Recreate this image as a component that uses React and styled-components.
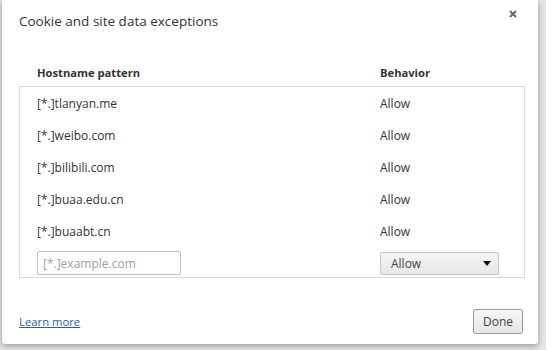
import React from "react";
import styled, { createGlobalStyle } from "styled-components";

const GlobalStyle = createGlobalStyle`
  html, body {
    margin: 0;
    padding: 0;
    width: 546px;
    height: 350px;
    overflow: hidden;
    background: #e4e4e4;
    font-family: "Open Sans", "Noto Sans", sans-serif;
  }
`;

const Backdrop = styled.div`
  width: 546px;
  height: 350px;
  box-sizing: border-box;
  padding: 0 8px 6px 2px;
  background: #e6e6e6;
`;

const Dialog = styled.div`
  position: relative;
  height: 100%;
  background: #fff;
  border-radius: 0 0 3px 3px;
  box-shadow: 0 2px 6px rgba(0, 0, 0, 0.35);
  display: flex;
  flex-direction: column;
  padding: 0 13px 0 17px;
  box-sizing: border-box;
`;

const Title = styled.h1`
  margin: 0;
  padding-top: 12px;
  height: 48px;
  box-sizing: border-box;
  font-size: 13.5px;
  font-weight: 400;
  color: #333;
`;

const CloseButton = styled.svg`
  position: absolute;
  top: 10px;
  right: 21px;
  width: 8px;
  height: 8px;
`;

const HeaderRow = styled.div`
  display: grid;
  grid-template-columns: 343px 1fr;
  padding-left: 18px;
  height: 38px;
  box-sizing: border-box;
  padding-bottom: 6px;
  align-items: end;
  font-size: 11.2px;
  font-weight: 700;
  color: #333;
`;

const ListBox = styled.div`
  border: 1px solid #d9d9d9;
  width: 506px;
  height: 192px;
  box-sizing: border-box;
`;

const Row = styled.div`
  display: grid;
  grid-template-columns: 343px 1fr;
  padding-left: 17px;
  height: 32px;
  align-items: center;
  font-size: 12px;
  color: #333;
`;

const PatternInput = styled.div`
  width: 144px;
  height: 24px;
  box-sizing: border-box;
  border: 1px solid #bfbfbf;
  border-radius: 2px;
  padding-left: 5px;
  display: flex;
  align-items: center;
  color: #a0a0a0;
  font-size: 12px;
`;

const Select = styled.div`
  width: 119px;
  height: 23px;
  box-sizing: border-box;
  border: 1px solid #c3c3c3;
  border-radius: 2px;
  background: linear-gradient(#f5f5f5, #e7e7e7);
  display: flex;
  align-items: center;
  justify-content: space-between;
  padding: 0 7px 0 10px;
  font-size: 12px;
  color: #444;
`;

const Arrow = styled.span`
  width: 0;
  height: 0;
  border-left: 4px solid transparent;
  border-right: 4px solid transparent;
  border-top: 5px solid #111;
`;

const Footer = styled.div`
  margin-top: auto;
  display: flex;
  align-items: center;
  justify-content: space-between;
  height: 35px;
  margin-bottom: 5px;
  padding-right: 2px;
`;

const LearnMore = styled.a`
  font-size: 11.3px;
  color: #2a5db0;
  text-decoration: underline;
`;

const DoneButton = styled.button`
  width: 50px;
  height: 25px;
  border: 1px solid #9a9a9a;
  border-radius: 2px;
  background: linear-gradient(#f7f7f7, #e6e6e6);
  font-family: inherit;
  font-size: 12px;
  color: #444;
  padding: 0;
`;

const entries = [
  "[*.]tlanyan.me",
  "[*.]weibo.com",
  "[*.]bilibili.com",
  "[*.]buaa.edu.cn",
  "[*.]buaabt.cn",
];

export default function App() {
  return (
    <>
      <GlobalStyle />
      <Backdrop>
        <Dialog>
          <Title>Cookie and site data exceptions</Title>
          <CloseButton viewBox="0 0 8 8">
            <path d="M1 1 L7 7 M7 1 L1 7" stroke="#666" strokeWidth="2" />
          </CloseButton>
          <HeaderRow>
            <span>Hostname pattern</span>
            <span>Behavior</span>
          </HeaderRow>
          <ListBox>
            {entries.map((host) => (
              <Row key={host}>
                <span>{host}</span>
                <span>Allow</span>
              </Row>
            ))}
            <Row>
              <PatternInput>[*.]example.com</PatternInput>
              <Select>
                Allow
                <Arrow />
              </Select>
            </Row>
          </ListBox>
          <Footer>
            <LearnMore href="#">Learn more</LearnMore>
            <DoneButton>Done</DoneButton>
          </Footer>
        </Dialog>
      </Backdrop>
    </>
  );
}
